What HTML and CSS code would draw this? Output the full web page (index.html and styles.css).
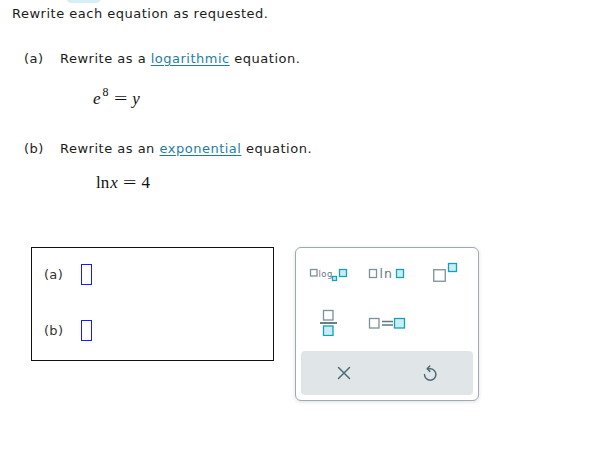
FILE: index.html
```html
<!DOCTYPE html>
<html>
<head>
<meta charset="utf-8">
<link rel="stylesheet" href="styles.css">
</head>
<body>
<div class="top-tab"></div>
<div class="page">
  <p class="title">Rewrite each equation as requested.</p>

  <div class="part part-a">
    <div class="part-head"><span class="lbl">(a)</span><span>Rewrite as a <a class="link">logarithmic</a> equation.</span></div>
    <div class="eq eq-a"><i>e</i><sup>8</sup><span class="op">=</span><i>y</i></div>
  </div>

  <div class="part part-b">
    <div class="part-head"><span class="lbl">(b)</span><span>Rewrite as an <a class="link">exponential</a> equation.</span></div>
    <div class="eq eq-b">ln<i class="vx">x</i><span class="op">=</span>4</div>
  </div>

  <div class="work">
    <div class="answers">
      <div class="ans-row"><span class="ans-lbl">(a)</span><span class="slot"></span></div>
      <div class="ans-row"><span class="ans-lbl">(b)</span><span class="slot"></span></div>
    </div>

    <div class="palette">
      <div class="keys">
        <div class="key">
          <svg width="44" height="20" viewBox="307 262 44 20">
            <rect class="g" x="309.5" y="269.5" width="6.5" height="6.5"/>
            <text class="t" x="317.5" y="276.5" font-size="8.5">log</text>
            <rect class="c" x="331.5" y="276.5" width="4" height="4"/>
            <rect class="c" x="338.5" y="269.5" width="7" height="7"/>
          </svg>
        </div>
        <div class="key">
          <svg width="44" height="20" viewBox="364 262 44 20">
            <rect class="g" x="368.5" y="269.5" width="7" height="8"/>
            <text class="t" x="378.5" y="278" font-size="12.5" letter-spacing="1">ln</text>
            <rect class="c" x="395.5" y="269.5" width="7" height="8"/>
          </svg>
        </div>
        <div class="key">
          <svg width="28" height="24" viewBox="430 261 28 24">
            <rect class="g" x="433.75" y="270.75" width="11.5" height="11.5"/>
            <rect class="c" x="448.5" y="264.5" width="8" height="8"/>
          </svg>
        </div>
        <div class="key">
          <svg width="24" height="28" viewBox="317 308 24 28">
            <rect class="g" x="322.5" y="310.5" width="9.5" height="9.5"/>
            <line class="ln" x1="319" y1="323" x2="336" y2="323"/>
            <rect class="c" x="322.5" y="326" width="9.5" height="9.5"/>
          </svg>
        </div>
        <div class="key">
          <svg width="44" height="20" viewBox="364 312 44 20">
            <rect class="g" x="368.5" y="318.5" width="9.5" height="9.5"/>
            <line class="ln2" x1="381" y1="321.5" x2="392" y2="321.5"/>
            <line class="ln2" x1="381" y1="325" x2="392" y2="325"/>
            <rect class="c" x="393.5" y="318.5" width="10" height="9.5"/>
          </svg>
        </div>
        <div class="key"></div>
      </div>
      <div class="actions">
        <div class="act">
          <svg width="14" height="14" viewBox="0 0 14 14">
            <path class="ic" d="M1.5 1.5 L12.5 12.5 M12.5 1.5 L1.5 12.5"/>
          </svg>
        </div>
        <div class="act">
          <svg width="16" height="18" viewBox="0 0 16 18">
            <path class="ic" d="M2.5 10.5 A5.7 5.7 0 1 0 8.2 4.8 L5.6 4.8"/>
            <path class="ic" d="M7.8 2 L5.2 4.8 L7.8 7.4"/>
          </svg>
        </div>
      </div>
    </div>
  </div>
</div>
</body>
</html>
```

FILE: styles.css
```css
html, body {
  margin: 0;
  padding: 0;
  background: #ffffff;
}

body {
  font-family: "DejaVu Sans", Verdana, sans-serif;
  font-size: 13px;
  letter-spacing: 0.5px;
  color: #1c1c1c;
  width: 593px;
  height: 455px;
  position: relative;
  overflow: hidden;
}

.top-tab {
  position: absolute;
  left: 66px;
  top: -8px;
  width: 35px;
  height: 11px;
  border-radius: 6px;
  background: #d6eff6;
}

.page {
  padding: 4px 0 0 12px;
}

.title {
  margin: 0;
  line-height: 20px;
}

.part {
  padding-left: 12px;
}

.part-a {
  margin-top: 25px;
}

.part-b {
  margin-top: 27px;
}

.part-head {
  display: flex;
  line-height: 20px;
}

.lbl {
  width: 36px;
}

.link {
  color: #1d7fa5;
  text-decoration: underline;
  text-underline-offset: 2px;
}

.eq {
  font-family: "Liberation Serif", "Times New Roman", serif;
  font-size: 17px;
  letter-spacing: 0;
  color: #111;
  line-height: 24px;
}

.eq-a {
  margin-top: 18px;
  padding-left: 69px;
}

.eq-a sup {
  font-size: 12px;
  position: relative;
  top: -8px;
  vertical-align: baseline;
  margin-left: 2px;
}

.eq-b {
  margin-top: 12px;
  padding-left: 72px;
}

.vx {
  margin-left: 1px;
}

.op {
  display: inline-block;
  transform: scaleX(1.4);
  margin: 0 7px;
}

.work {
  display: flex;
  align-items: flex-start;
  gap: 21px;
  margin-top: 52px;
  padding-left: 19px;
}

.answers {
  border: 1px solid #111;
  padding: 16px 0 0 12px;
  box-sizing: content-box;
  width: 229px;
  height: 96px;
  display: flex;
  flex-direction: column;
  gap: 35px;
}

.ans-row {
  display: flex;
  align-items: center;
  height: 21px;
}

.ans-lbl {
  width: 37px;
  color: #333;
  font-size: 13px;
  letter-spacing: 0.3px;
}

.slot {
  width: 9px;
  height: 19px;
  border: 1px solid #1a1aff;
}

.palette {
  width: 172px;
  border: 1px solid #9eaab0;
  border-radius: 6px;
  padding: 5px;
  box-shadow: 0 1px 4px rgba(0, 0, 0, 0.12);
  background: #fff;
}

.keys {
  display: grid;
  grid-template-columns: repeat(3, 1fr);
  grid-template-rows: 38px 50px;
  row-gap: 6px;
  margin-bottom: 4px;
}

.key {
  display: flex;
  align-items: center;
  justify-content: center;
}

.key svg, .act svg {
  display: block;
}

.g {
  fill: #fff;
  stroke: #7c9199;
  stroke-width: 1.3;
}

.c {
  fill: #c7eef4;
  stroke: #16a1b7;
  stroke-width: 1.3;
}

.t {
  fill: #647a83;
  font-family: "DejaVu Sans", sans-serif;
}

.ln {
  stroke: #6a8089;
  stroke-width: 2;
}

.ln2 {
  stroke: #5f7680;
  stroke-width: 1.5;
}

.actions {
  display: flex;
  height: 44px;
  background: #e0e6e8;
  border-radius: 4px;
}

.act {
  flex: 1;
  display: flex;
  align-items: center;
  justify-content: center;
}

.ic {
  fill: none;
  stroke: #4f6a74;
  stroke-width: 1.5;
  stroke-linecap: round;
  stroke-linejoin: round;
}
```
